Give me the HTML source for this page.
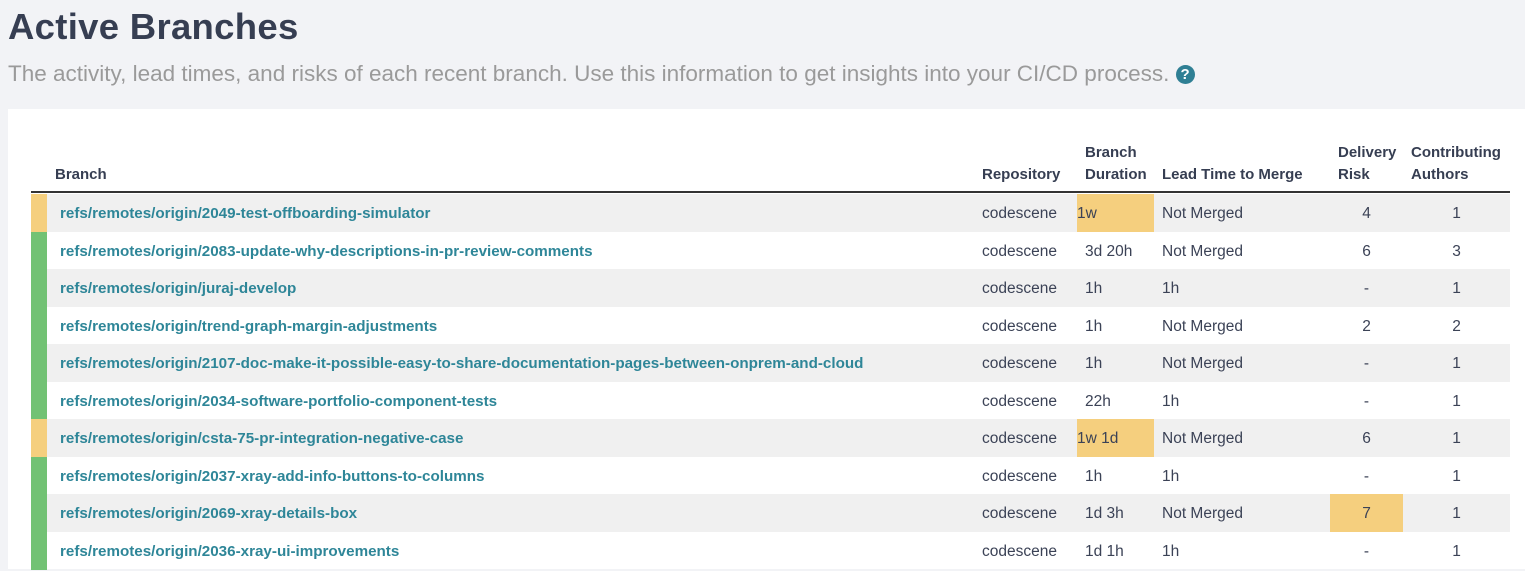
<!DOCTYPE html>
<html><head><meta charset="utf-8"><style>
*{margin:0;padding:0;box-sizing:border-box}
body{width:1525px;height:553px;overflow:hidden;background:#f2f3f6;font-family:"Liberation Sans",sans-serif;position:relative;color:#3b4256}
h1{position:absolute;left:8px;top:6px;font-size:36.5px;font-weight:bold;color:#363e52;letter-spacing:0.3px}
.sub{position:absolute;left:8px;top:61px;font-size:22.5px;color:#9a9a9a;white-space:nowrap}
.q{display:inline-block;width:19px;height:19px;border-radius:50%;background:#2f7f94;color:#fff;font-size:15px;font-weight:bold;text-align:center;line-height:19px;vertical-align:2px;margin-left:0px}
.card{position:absolute;left:8px;top:109px;right:0;height:460px;background:#fff}
.h{position:absolute;font-size:15px;font-weight:bold;color:#363e52;line-height:22px}
.hl{position:absolute;left:31px;top:191px;width:1479px;height:2px;background:#333}
.row{position:absolute;left:31px;width:1479px;height:38px;font-size:15.5px;line-height:39px}
.row.s{background:#f0f0f0}
.bar{position:absolute;left:0;top:0;width:16px;height:100%}
.y{background:#f5cf7e}.g{background:#72c274}
.c{position:absolute;top:0;height:100%;white-space:nowrap}
.b{left:29px;color:#2e8698;font-weight:bold;font-size:15.2px}
.r{left:951px}
.d{left:1046px;width:77px;padding-left:8px}
.d.y{padding-left:0}
.l{left:1131px}
.k{left:1299px;width:73px;text-align:center}
.a{left:1372px;width:107px;text-align:center}
</style></head><body>
<h1>Active Branches</h1>
<div class="sub">The activity, lead times, and risks of each recent branch. Use this information to get insights into your CI/CD process. <span class="q">?</span></div>
<div class="card"></div>
<div class="h" style="left:55px;top:164px">Branch</div>
<div class="h" style="left:982px;top:164px">Repository</div>
<div class="h" style="left:1085px;top:142px">Branch<br>Duration</div>
<div class="h" style="left:1162px;top:164px">Lead Time to Merge</div>
<div class="h" style="left:1338px;top:142px">Delivery<br>Risk</div>
<div class="h" style="left:1411px;top:142px">Contributing<br>Authors</div>
<div class="hl"></div>

<div class="row s" style="top:194px"><div class="bar y"></div><div class="c b">refs/remotes/origin/2049-test-offboarding-simulator</div><div class="c r">codescene</div><div class="c d y">1w</div><div class="c l">Not Merged</div><div class="c k">4</div><div class="c a">1</div></div>
<div class="row" style="top:231.5px"><div class="bar g"></div><div class="c b">refs/remotes/origin/2083-update-why-descriptions-in-pr-review-comments</div><div class="c r">codescene</div><div class="c d">3d 20h</div><div class="c l">Not Merged</div><div class="c k">6</div><div class="c a">3</div></div>
<div class="row s" style="top:269px"><div class="bar g"></div><div class="c b">refs/remotes/origin/juraj-develop</div><div class="c r">codescene</div><div class="c d">1h</div><div class="c l">1h</div><div class="c k">-</div><div class="c a">1</div></div>
<div class="row" style="top:306.5px"><div class="bar g"></div><div class="c b">refs/remotes/origin/trend-graph-margin-adjustments</div><div class="c r">codescene</div><div class="c d">1h</div><div class="c l">Not Merged</div><div class="c k">2</div><div class="c a">2</div></div>
<div class="row s" style="top:344px"><div class="bar g"></div><div class="c b">refs/remotes/origin/2107-doc-make-it-possible-easy-to-share-documentation-pages-between-onprem-and-cloud</div><div class="c r">codescene</div><div class="c d">1h</div><div class="c l">Not Merged</div><div class="c k">-</div><div class="c a">1</div></div>
<div class="row" style="top:381.5px"><div class="bar g"></div><div class="c b">refs/remotes/origin/2034-software-portfolio-component-tests</div><div class="c r">codescene</div><div class="c d">22h</div><div class="c l">1h</div><div class="c k">-</div><div class="c a">1</div></div>
<div class="row s" style="top:419px"><div class="bar y"></div><div class="c b">refs/remotes/origin/csta-75-pr-integration-negative-case</div><div class="c r">codescene</div><div class="c d y">1w 1d</div><div class="c l">Not Merged</div><div class="c k">6</div><div class="c a">1</div></div>
<div class="row" style="top:456.5px"><div class="bar g"></div><div class="c b">refs/remotes/origin/2037-xray-add-info-buttons-to-columns</div><div class="c r">codescene</div><div class="c d">1h</div><div class="c l">1h</div><div class="c k">-</div><div class="c a">1</div></div>
<div class="row s" style="top:494px"><div class="bar g"></div><div class="c b">refs/remotes/origin/2069-xray-details-box</div><div class="c r">codescene</div><div class="c d">1d 3h</div><div class="c l">Not Merged</div><div class="c k y">7</div><div class="c a">1</div></div>
<div class="row" style="top:531.5px"><div class="bar g"></div><div class="c b">refs/remotes/origin/2036-xray-ui-improvements</div><div class="c r">codescene</div><div class="c d">1d 1h</div><div class="c l">1h</div><div class="c k">-</div><div class="c a">1</div></div>
</body></html>
